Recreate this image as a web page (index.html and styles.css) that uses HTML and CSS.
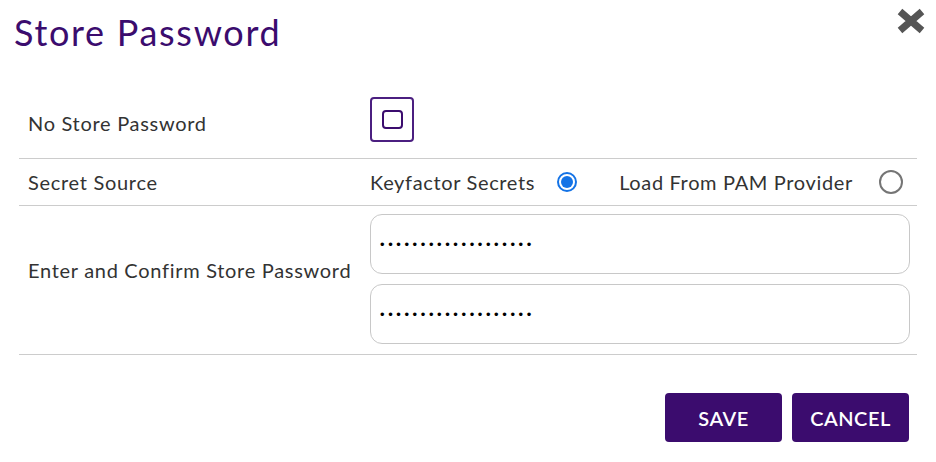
FILE: index.html
```html
<!DOCTYPE html>
<html>
<head>
<meta charset="utf-8">
<link rel="stylesheet" href="styles.css">
</head>
<body>
<div class="dialog">
  <div class="header">
    <h1 class="title">Store Password</h1>
    <button class="close" aria-label="Close">
      <svg width="30" height="26" viewBox="0 0 30 26"><path d="M4 3.5 L26 22.5 M26 3.5 L4 22.5" stroke="#555" stroke-width="7" fill="none"/></svg>
    </button>
  </div>
  <div class="rows">
    <div class="row row-check">
      <div class="label">No Store Password</div>
      <div class="field">
        <span class="checkbox"><span class="checkbox-inner"></span></span>
      </div>
    </div>
    <div class="row row-radio">
      <div class="label">Secret Source</div>
      <div class="field radios">
        <span class="radio-text">Keyfactor Secrets</span>
        <span class="radio checked"><span class="dot"></span></span>
        <span class="radio-text second">Load From PAM Provider</span>
        <span class="radio empty"></span>
      </div>
    </div>
    <div class="row row-pass">
      <div class="label">Enter and Confirm Store Password</div>
      <div class="field inputs">
        <div class="input">&#8226;&#8226;&#8226;&#8226;&#8226;&#8226;&#8226;&#8226;&#8226;&#8226;&#8226;&#8226;&#8226;&#8226;&#8226;&#8226;&#8226;&#8226;&#8226;</div>
        <div class="input">&#8226;&#8226;&#8226;&#8226;&#8226;&#8226;&#8226;&#8226;&#8226;&#8226;&#8226;&#8226;&#8226;&#8226;&#8226;&#8226;&#8226;&#8226;&#8226;</div>
      </div>
    </div>
  </div>
  <div class="actions">
    <button class="btn">SAVE</button>
    <button class="btn">CANCEL</button>
  </div>
</div>
</body>
</html>
```
FILE: styles.css
```css
* { box-sizing: border-box; }
html, body { margin: 0; padding: 0; background: #fff; }
body { font-family: Lato, "Open Sans", sans-serif; color: #333; }
.dialog { width: 936px; height: 462px; }
.header { display: flex; justify-content: space-between; align-items: flex-start; padding: 0 10px 0 14px; height: 88px; }
.title { margin: 0; padding-top: 11px; font-size: 36px; line-height: 42px; font-weight: 400; letter-spacing: 1.7px; color: #3b0c6e; }
.close { margin-top: 8px; padding: 0; border: 0; background: none; width: 30px; height: 26px; display: block; }
.close svg { display: block; }
.rows { margin: 0 19px; }
.row { display: flex; align-items: center; border-bottom: 1px solid #ccc; }
.label { width: 351px; padding-left: 9px; font-size: 20px; letter-spacing: 0.7px; }
.field { flex: 1; }
.row-check { padding: 9px 0 16px; }
.row-check .label { padding-top: 7px; }
.checkbox { width: 44px; height: 45px; border: 2px solid #4b1f80; border-radius: 4px; display: flex; align-items: center; justify-content: center; }
.checkbox-inner { width: 21px; height: 19px; border: 2.5px solid #3b0c6e; border-radius: 4px; }
.row-radio { height: 47px; }
.radios { display: flex; align-items: center; }
.radio-text { font-size: 20px; letter-spacing: 0.65px; }
.radio-text.second { margin-left: 42px; }
.radio { border-radius: 50%; display: flex; align-items: center; justify-content: center; }
.radio.checked { width: 20px; height: 20px; border: 2px solid #1473e6; margin-left: 22px; }
.radio.checked .dot { width: 12px; height: 12px; border-radius: 50%; background: #1473e6; }
.radio.empty { width: 24px; height: 24px; border: 2px solid #757575; margin-left: 26px; }
.row-pass { padding: 8px 0 10px; }
.row-pass .label { padding-bottom: 18px; }
.inputs { display: flex; flex-direction: column; gap: 10px; padding-right: 7px; }
.input { height: 60px; border: 1px solid #c8c8c8; border-radius: 12px; padding-left: 9px; display: flex; align-items: center; font-family: "Liberation Sans", sans-serif; font-size: 13px; letter-spacing: 3.6px; color: #000; }
.actions { display: flex; justify-content: flex-end; gap: 10px; padding: 38px 27px 0 0; }
.btn { width: 117px; height: 49px; background: #3b0c6e; color: #fff; border: 0; border-radius: 4px; font-family: Lato, sans-serif; font-size: 20px; font-weight: 600; letter-spacing: 0.5px; padding: 0; }
```
